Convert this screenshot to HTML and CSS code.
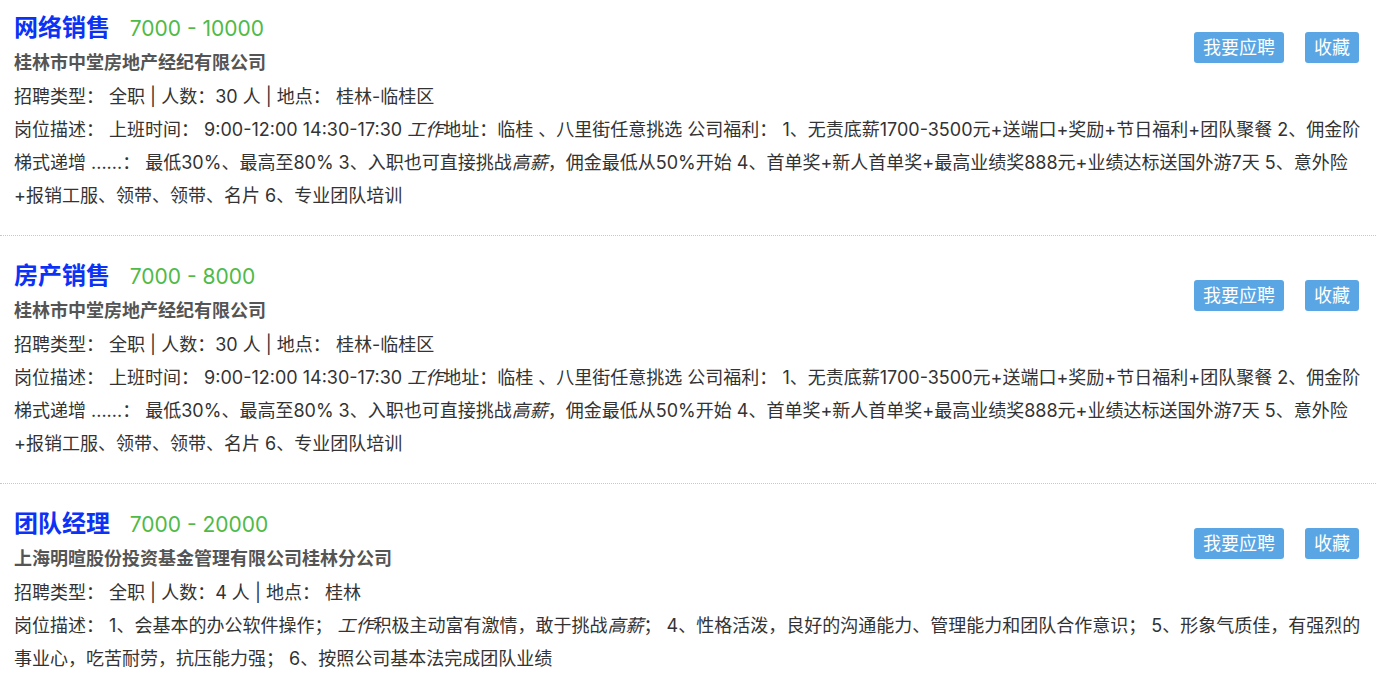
FILE: index.html
```html
<!DOCTYPE html>
<html lang="zh-CN">

<head>
    <meta charset="utf-8">
    <meta name="viewport" content="width=device-width, initial-scale=1.0">
    <title>职位列表</title>
    <link rel="stylesheet" href="styles.css">
</head>

<body>
    <main class="job-list">
        <article class="job">
            <div class="job-head">
                <div class="job-main">
                    <h2 class="job-title">网络销售 <span class="salary">7000 - 10000</span></h2>
                    <p class="company">桂林市中堂房地产经纪有限公司</p>
                </div>
                <div class="actions">
                    <button class="btn">我要应聘</button>
                    <button class="btn">收藏</button>
                </div>
            </div>
            <p class="info">招聘类型： 全职 | 人数：30 人 | 地点： 桂林-临桂区</p>
            <p class="desc">岗位描述： 上班时间： 9:00-12:00 14:30-17:30 <em>工作</em>地址：临桂 、八里街任意挑选 公司福利： 1、无责底薪1700-3500元+送端口+奖励+节日福利+团队聚餐 2、佣金阶梯式递增 ......： 最低30%、最高至80% 3、入职也可直接挑战<em>高薪</em>，佣金最低从50%开始 4、首单奖+新人首单奖+最高业绩奖888元+业绩达标送国外游7天 5、意外险+报销工服、领带、领带、名片 6、专业团队培训</p>
        </article>

        <article class="job">
            <div class="job-head">
                <div class="job-main">
                    <h2 class="job-title">房产销售 <span class="salary">7000 - 8000</span></h2>
                    <p class="company">桂林市中堂房地产经纪有限公司</p>
                </div>
                <div class="actions">
                    <button class="btn">我要应聘</button>
                    <button class="btn">收藏</button>
                </div>
            </div>
            <p class="info">招聘类型： 全职 | 人数：30 人 | 地点： 桂林-临桂区</p>
            <p class="desc">岗位描述： 上班时间： 9:00-12:00 14:30-17:30 <em>工作</em>地址：临桂 、八里街任意挑选 公司福利： 1、无责底薪1700-3500元+送端口+奖励+节日福利+团队聚餐 2、佣金阶梯式递增 ......： 最低30%、最高至80% 3、入职也可直接挑战<em>高薪</em>，佣金最低从50%开始 4、首单奖+新人首单奖+最高业绩奖888元+业绩达标送国外游7天 5、意外险+报销工服、领带、领带、名片 6、专业团队培训</p>
        </article>

        <article class="job">
            <div class="job-head">
                <div class="job-main">
                    <h2 class="job-title">团队经理 <span class="salary">7000 - 20000</span></h2>
                    <p class="company">上海明暄股份投资基金管理有限公司桂林分公司</p>
                </div>
                <div class="actions">
                    <button class="btn">我要应聘</button>
                    <button class="btn">收藏</button>
                </div>
            </div>
            <p class="info">招聘类型： 全职 | 人数：4 人 | 地点： 桂林</p>
            <p class="desc">岗位描述： 1、会基本的办公软件操作； <em>工作</em>积极主动富有激情，敢于挑战<em>高薪</em>； 4、性格活泼，良好的沟通能力、管理能力和团队合作意识； 5、形象气质佳，有强烈的事业心，吃苦耐劳，抗压能力强； 6、按照公司基本法完成团队业绩</p>
        </article>
    </main>
</body>

</html>
```

FILE: styles.css
```css
* {
    padding: 0;
    margin: 0;
    box-sizing: border-box;
}

body {
    background-color: #fff;
    color: #333;
    font-family: "Inter", "Noto Sans CJK SC", sans-serif;
    font-size: 18px;
}

.job-list {
    width: 1376px;
}

.job {
    padding: 23px 14px 23px 14px;
    border-bottom: 1px dotted #c8c8c8;
}

.job:first-child {
    padding-top: 11px;
}

.job:last-child {
    border-bottom: none;
}

.job-head {
    display: flex;
    justify-content: space-between;
    align-items: flex-start;
}

.job-title {
    font-size: 24px;
    line-height: 34px;
    color: #0b32f5;
    font-weight: bold;
}

.salary {
    font-size: 21px;
    font-weight: normal;
    color: #4fba47;
    margin-left: 14px;
}

.company {
    font-size: 18px;
    line-height: 34px;
    font-weight: bold;
    color: #555;
}

.actions {
    display: flex;
    gap: 21px;
    margin-top: 21px;
    margin-right: 3px;
}

.btn {
    border: none;
    background-color: #5aa6e4;
    color: #fff;
    font-family: "Inter", "Noto Sans CJK SC", sans-serif;
    font-size: 18px;
    line-height: 31px;
    height: 31px;
    padding: 0 9px;
    border-radius: 3px;
    cursor: pointer;
}

.info,
.desc {
    line-height: 33px;
}

.desc em {
    font-style: italic;
}
```
